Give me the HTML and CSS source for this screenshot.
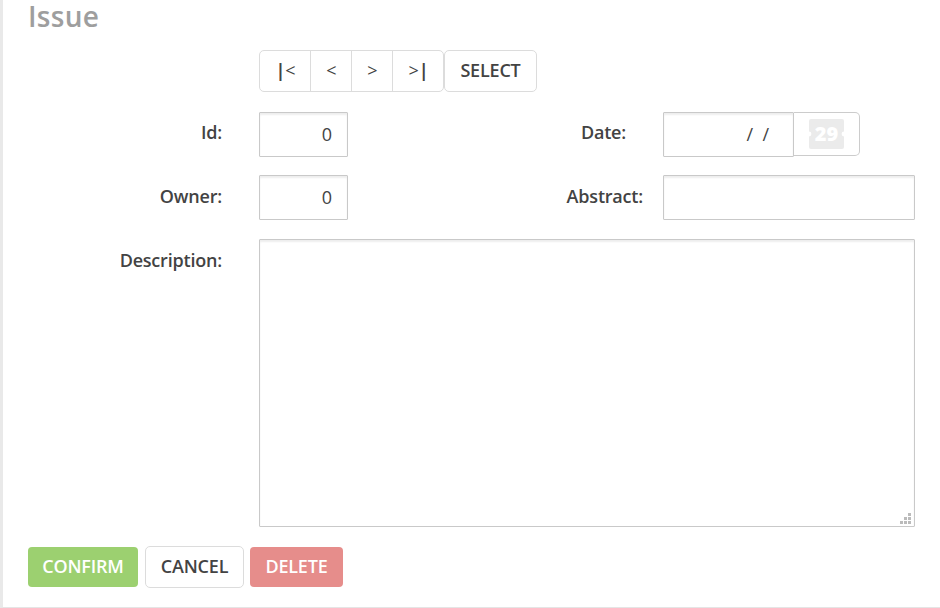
FILE: index.html
```html
<!DOCTYPE html>
<html lang="en">
<head>
<meta charset="utf-8">
<title>Issue</title>
<link rel="stylesheet" href="styles.css">
</head>
<body>
<main class="panel">
  <h1>Issue</h1>
  <div class="toolbar">
    <div class="group"><button class="btn first"><span class="bar">|</span>&lt;</button><button class="btn">&lt;</button><button class="btn">&gt;</button><button class="btn last">&gt;<span class="bar">|</span></button></div>
    <button class="btn select">SELECT</button>
  </div>
  <form class="form">
    <label class="label top-label">Id:</label>
    <div class="field short">0</div>
    <label class="label top-label date-label">Date:</label>
    <div class="date">
      <div class="field date-value">/&nbsp; /</div>
      <div class="picker">
        <svg width="35" height="30" viewBox="0 0 35 30"><rect width="35" height="30" rx="2" fill="#ebebeb"/><circle cx="0" cy="15" r="2.4" fill="#fff"/><circle cx="35" cy="15" r="2.4" fill="#fff"/><text class="day" x="17.5" y="22" text-anchor="middle">29</text></svg>
      </div>
    </div>
    <label class="label">Owner:</label>
    <div class="field short">0</div>
    <label class="label abstract-label">Abstract:</label>
    <div class="field abstract"></div>
    <label class="label">Description:</label>
    <div class="field description">
      <svg width="11" height="11" viewBox="0 0 11 11" fill="#bbb"><path d="M8 0h3v3H8zM4 4h3v3H4zM8 4h3v3H8zM0 8h3v3H0zM4 8h3v3H4zM8 8h3v3H8z"/></svg>
    </div>
  </form>
  <div class="actions">
    <button class="btn confirm">CONFIRM</button>
    <button class="btn cancel">CANCEL</button>
    <button class="btn delete">DELETE</button>
  </div>
</main>
</body>
</html>
```
FILE: styles.css
```css
* { box-sizing: border-box; }
body { margin: 0; background: #fff; color: #434343; font: 18px "Open Sans", sans-serif; }
.panel { height: 608px; border-left: 3px solid #e9e9e9; border-bottom: 1px solid #e5e5e5; padding-left: 25px; }
h1 { margin: 0; height: 50px; font-size: 28px; line-height: 32px; font-weight: 600; color: #9e9e9e; letter-spacing: 0.3px; }
.toolbar { display: flex; margin-left: 231px; height: 42px; }
.group { display: flex; width: 185px; border: 1px solid #dcdcdc; border-radius: 5px; }
.btn { display: block; padding: 0 0 2px; margin: 0; border: 0; background: none; color: #434343; font: 600 18px/38px "Open Sans", sans-serif; letter-spacing: -0.2px; text-align: center; }
.group .btn { width: 41px; padding-left: 1px; border-right: 1px solid #dcdcdc; font-weight: 400; letter-spacing: 0; }
.group .first { width: 51px; }
.group .last { width: 50px; border-right: 0; }
.group .bar { font-weight: 700; }
.select, .cancel { border: 1px solid #dcdcdc; border-radius: 5px; height: 42px; }
.select { width: 93px; }
.form { display: grid; grid-template-columns: 194px 37px 89px 295px 20px 252px; grid-template-rows: 45px 46px 288px; row-gap: 18px; margin: 20px 0 0; }
.label { grid-column: 1; text-align: right; line-height: 43px; font-weight: 600; letter-spacing: -0.2px; }
.top-label { line-height: 41px; }
.short { grid-column: 3; }
.date-label, .abstract-label { grid-column: 4; }
.date-label { padding-right: 17px; }
.date, .abstract { grid-column: 6; }
.field { border: 1px solid #c9c9c9; height: 45px; line-height: 43px; border-radius: 1px; box-shadow: inset 0 2px 2px rgba(0,0,0,.07); text-align: right; padding-right: 15px; }
.date { display: flex; }
.date-value { width: 131px; padding-right: 24px; }
.picker { display: flex; width: 66px; height: 44px; align-items: center; justify-content: center; border: 1px solid #ccc; border-left: 0; border-radius: 0 5px 5px 0; }
.day { font: 800 20px "Open Sans", sans-serif; fill: #fff; }
.description { grid-column: 3 / -1; height: 288px; display: flex; align-items: flex-end; justify-content: flex-end; padding: 0 3px 2px 0; }
.actions { display: flex; align-items: center; height: 42px; margin-top: 19px; }
.confirm, .delete { height: 40px; border-radius: 4px; color: #fff; }
.confirm { width: 110px; background: #9cd070; }
.cancel { width: 99px; margin: 0 6px 0 7px; }
.delete { width: 93px; background: #e68d8b; }
```
